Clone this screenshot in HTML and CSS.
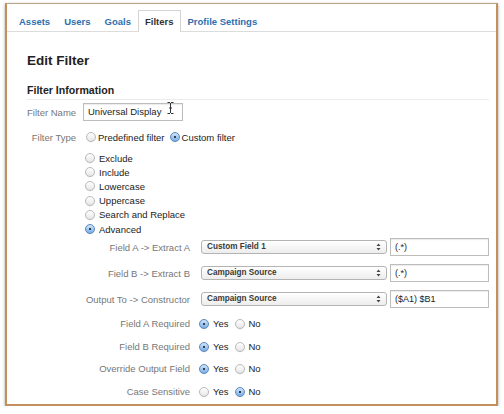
FILE: index.html
```html
<!DOCTYPE html>
<html>
<head>
<meta charset="utf-8">
<link rel="stylesheet" href="styles.css">
</head>
<body>
<div class="frame">
  <nav class="tabs">
    <a class="tab">Assets</a>
    <a class="tab">Users</a>
    <a class="tab">Goals</a>
    <a class="tab active">Filters</a>
    <a class="tab">Profile Settings</a>
  </nav>
  <main class="content">
    <h1 class="title">Edit Filter</h1>
    <h2 class="section">Filter Information</h2>
    <div class="field name-row">
      <span class="label">Filter Name</span>
      <div class="text-input name-input">Universal Display
        <svg class="ibeam" width="7" height="12" viewBox="0 0 7 12"><path d="M0.5 0.5h2.5M4 0.5h2.5M3.5 1v10M0.5 11.5h2.5M4 11.5h2.5M2 6h3" stroke="#333" stroke-width="1" fill="none"/></svg>
      </div>
    </div>
    <div class="field type-row">
      <span class="label">Filter Type</span>
      <div class="opts">
        <span class="radio"></span><span class="opt-text">Predefined filter</span>
        <span class="radio on"></span><span class="opt-text">Custom filter</span>
      </div>
    </div>
    <ul class="radio-list">
      <li><span class="radio"></span>Exclude</li>
      <li><span class="radio"></span>Include</li>
      <li><span class="radio"></span>Lowercase</li>
      <li><span class="radio"></span>Uppercase</li>
      <li><span class="radio"></span>Search and Replace</li>
      <li><span class="radio on"></span>Advanced</li>
    </ul>
    <div class="adv">
      <span class="adv-label">Field A -&gt; Extract A</span>
      <div class="select">Custom Field 1<svg class="arrows" width="5" height="8" viewBox="0 0 5 8"><path d="M2.5 0.5L4.5 3H0.5Z M2.5 7.5L4.5 5H0.5Z" fill="#444"/></svg></div>
      <div class="text-input adv-input">(.*)</div>

      <span class="adv-label">Field B -&gt; Extract B</span>
      <div class="select">Campaign Source<svg class="arrows" width="5" height="8" viewBox="0 0 5 8"><path d="M2.5 0.5L4.5 3H0.5Z M2.5 7.5L4.5 5H0.5Z" fill="#444"/></svg></div>
      <div class="text-input adv-input">(.*)</div>

      <span class="adv-label">Output To -&gt; Constructor</span>
      <div class="select">Campaign Source<svg class="arrows" width="5" height="8" viewBox="0 0 5 8"><path d="M2.5 0.5L4.5 3H0.5Z M2.5 7.5L4.5 5H0.5Z" fill="#444"/></svg></div>
      <div class="text-input adv-input">($A1) $B1</div>
    </div>
    <div class="yn">
      <span class="adv-label">Field A Required</span>
      <div class="yn-opts"><span class="radio on"></span><span class="yes">Yes</span><span class="radio"></span><span>No</span></div>
      <span class="adv-label">Field B Required</span>
      <div class="yn-opts"><span class="radio on"></span><span class="yes">Yes</span><span class="radio"></span><span>No</span></div>
      <span class="adv-label">Override Output Field</span>
      <div class="yn-opts"><span class="radio on"></span><span class="yes">Yes</span><span class="radio"></span><span>No</span></div>
      <span class="adv-label">Case Sensitive</span>
      <div class="yn-opts"><span class="radio"></span><span class="yes">Yes</span><span class="radio on"></span><span>No</span></div>
    </div>
  </main>
</div>
</body>
</html>
```

FILE: styles.css
```css
* { box-sizing: border-box; }
html, body { margin: 0; padding: 0; background: #fff; }
body {
  font-family: "Liberation Sans", Arial, sans-serif;
  font-size: 9.5px;
  color: #222;
}
.frame {
  margin: 3px 0 0 5px;
  width: 493px;
  height: 403px;
  border: 2px solid #c58f5c;
  border-top: 1px solid #b8a68c;
  box-shadow: 0 1px 3px rgba(0,0,0,0.35);
  background: #fff;
  display: flex;
  flex-direction: column;
}
.tabs {
  display: flex;
  align-items: flex-end;
  padding: 6px 0 0 5px;
  border-bottom: 1px solid #dcdcdc;
  height: 28px;
}
.tab {
  display: block;
  padding: 0 6px;
  height: 21px;
  line-height: 21px;
  font-weight: bold;
  color: #2d6fae;
  border: 1px solid transparent;
  border-bottom: none;
}
.tab.active {
  color: #333;
  background: #fff;
  border-color: #d4d4d4;
  margin-bottom: -1px;
  height: 22px;
}
.content {
  padding: 0 7px 0 20px;
  display: flex;
  flex-direction: column;
}
.title {
  margin: 21px 0 0;
  font-size: 13.5px;
  line-height: 16px;
  font-weight: bold;
  color: #222;
}
.section {
  margin: 14px 0 0;
  font-size: 10.6px;
  line-height: 14px;
  font-weight: bold;
  color: #222;
  padding-bottom: 2px;
  border-bottom: 1px solid #ececec;
}
.field {
  display: grid;
  grid-template-columns: 49px 1fr;
  column-gap: 7px;
  align-items: center;
}
.label {
  color: #777;
  text-align: right;
  white-space: nowrap;
}
.name-row { margin-top: 3px; height: 18px; }
.text-input {
  border: 1px solid #bdbdbd;
  box-shadow: inset 0 1px 1px rgba(0,0,0,0.08);
  background: #fff;
  height: 18px;
  line-height: 16px;
  padding-left: 4px;
  color: #222;
}
.name-input { width: 100px; position: relative; }
.ibeam { position: absolute; left: 83px; top: -2px; }
.type-row { margin-top: 8px; height: 16px; }
.opts { display: flex; align-items: center; }
.opts .radio:first-child { margin-left: 3px; }
.opt-text { margin-left: 2px; margin-right: 5px; }
.radio {
  display: inline-block;
  flex: none;
  width: 10px;
  height: 10px;
  border-radius: 50%;
  border: 1px solid #b9b9b9;
  background: linear-gradient(#ffffff, #e6e6e6);
  box-shadow: 0 0.5px 0.5px rgba(0,0,0,0.1);
  position: relative;
}
.radio.on {
  border-color: #5b87b8;
  background: linear-gradient(#cfe5fb, #78aee8);
}
.radio.on::after {
  content: "";
  position: absolute;
  left: 3px;
  top: 3px;
  width: 2px;
  height: 2px;
  border-radius: 50%;
  background: #111;
}
.radio-list {
  list-style: none;
  margin: 6px 0 0 58px;
  padding: 0;
}
.radio-list li {
  display: flex;
  align-items: center;
  height: 14.2px;
  color: #222;
}
.radio-list .radio { margin-right: 4px; }
.adv {
  display: grid;
  grid-template-columns: 163px 197px 102px;
  row-gap: 8px;
  align-items: center;
  margin-top: 2px;
}
.adv-label {
  color: #777;
  text-align: right;
  white-space: nowrap;
}
.select {
  margin-left: 11px;
  width: 186px;
  height: 14px;
  border: 1px solid #b4b4b4;
  border-radius: 3px;
  background: linear-gradient(#ffffff, #ededed);
  font-size: 8.2px;
  font-weight: bold;
  color: #3a3a3a;
  line-height: 12px;
  padding-left: 5px;
  position: relative;
}
.arrows { position: absolute; right: 5px; top: 2px; }
.adv-input {
  margin-left: 3px;
  width: 99px;
  font-size: 9px;
}
.yn {
  display: grid;
  grid-template-columns: 163px 1fr;
  row-gap: 6.6px;
  margin-top: 8px;
  align-items: center;
}
.yn .adv-label, .yn-opts { height: 16px; line-height: 16px; }
.yn-opts { display: flex; align-items: center; padding-left: 9px; color: #222; }
.yn-opts .radio + span { margin-left: 4px; }
.yn-opts .yes { margin-right: 6px; }
```
